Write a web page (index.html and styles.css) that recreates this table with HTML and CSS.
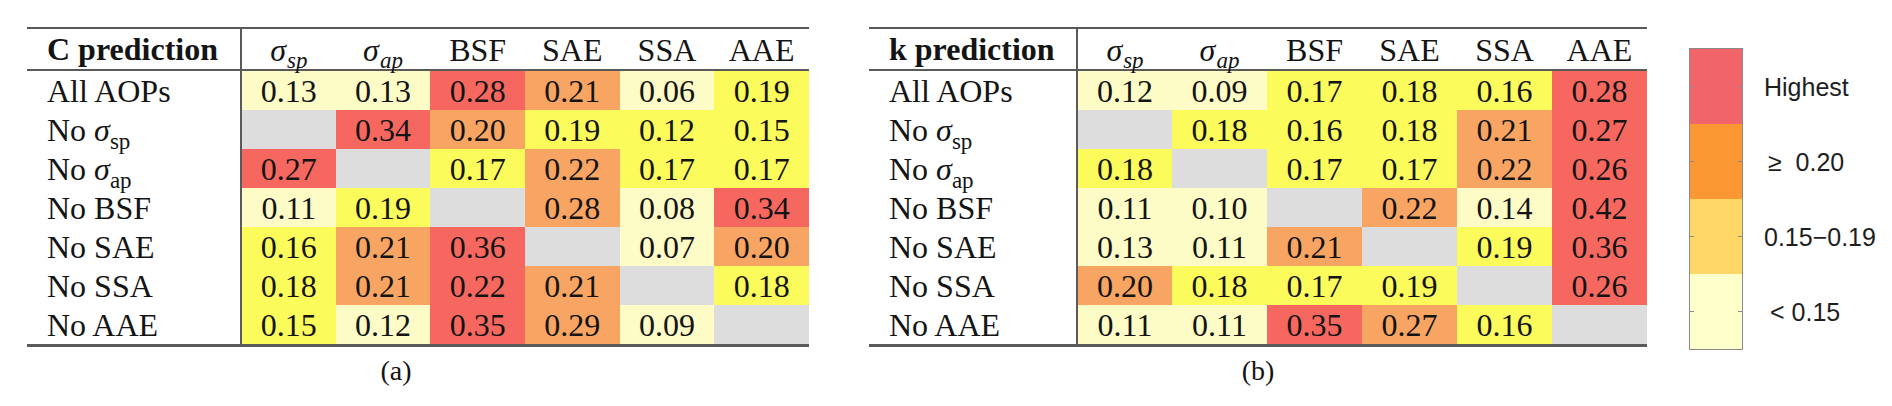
FILE: index.html
```html
<!DOCTYPE html>
<html>
<head>
<meta charset="utf-8">
<link rel="stylesheet" href="styles.css">
</head>
<body>
<div class="page">
  <div class="panel panel-a">
    <table class="tbl">
      <colgroup><col class="lab-a"><col class="c"><col class="c"><col class="c"><col class="c"><col class="c"><col class="c"></colgroup>
      <thead>
        <tr><th class="lab">C prediction</th><th><i>σ<sub>sp</sub></i></th><th><i>σ<sub>ap</sub></i></th><th>BSF</th><th>SAE</th><th>SSA</th><th>AAE</th></tr>
      </thead>
      <tbody>
        <tr><td class="lab">All AOPs</td><td class="p">0.13</td><td class="p">0.13</td><td class="r">0.28</td><td class="o">0.21</td><td class="p">0.06</td><td class="y">0.19</td></tr>
        <tr><td class="lab">No <i>σ</i><sub>sp</sub></td><td class="g"></td><td class="r">0.34</td><td class="o">0.20</td><td class="y">0.19</td><td class="y">0.12</td><td class="y">0.15</td></tr>
        <tr><td class="lab">No <i>σ</i><sub>ap</sub></td><td class="r">0.27</td><td class="g"></td><td class="y">0.17</td><td class="o">0.22</td><td class="y">0.17</td><td class="y">0.17</td></tr>
        <tr><td class="lab">No BSF</td><td class="p">0.11</td><td class="y">0.19</td><td class="g"></td><td class="o">0.28</td><td class="p">0.08</td><td class="r">0.34</td></tr>
        <tr><td class="lab">No SAE</td><td class="y">0.16</td><td class="o">0.21</td><td class="r">0.36</td><td class="g"></td><td class="p">0.07</td><td class="o">0.20</td></tr>
        <tr><td class="lab">No SSA</td><td class="y">0.18</td><td class="o">0.21</td><td class="r">0.22</td><td class="o">0.21</td><td class="g"></td><td class="y">0.18</td></tr>
        <tr><td class="lab">No AAE</td><td class="y">0.15</td><td class="p">0.12</td><td class="r">0.35</td><td class="o">0.29</td><td class="p">0.09</td><td class="g"></td></tr>
      </tbody>
    </table>
    <div class="caption caption-a">(a)</div>
  </div>

  <div class="panel panel-b">
    <table class="tbl">
      <colgroup><col class="lab-b"><col class="c"><col class="c"><col class="c"><col class="c"><col class="c"><col class="c"></colgroup>
      <thead>
        <tr><th class="lab">k prediction</th><th><i>σ<sub>sp</sub></i></th><th><i>σ<sub>ap</sub></i></th><th>BSF</th><th>SAE</th><th>SSA</th><th>AAE</th></tr>
      </thead>
      <tbody>
        <tr><td class="lab">All AOPs</td><td class="p">0.12</td><td class="p">0.09</td><td class="y">0.17</td><td class="y">0.18</td><td class="y">0.16</td><td class="r">0.28</td></tr>
        <tr><td class="lab">No <i>σ</i><sub>sp</sub></td><td class="g"></td><td class="y">0.18</td><td class="y">0.16</td><td class="y">0.18</td><td class="o">0.21</td><td class="r">0.27</td></tr>
        <tr><td class="lab">No <i>σ</i><sub>ap</sub></td><td class="y">0.18</td><td class="g"></td><td class="y">0.17</td><td class="y">0.17</td><td class="o">0.22</td><td class="r">0.26</td></tr>
        <tr><td class="lab">No BSF</td><td class="p">0.11</td><td class="p">0.10</td><td class="g"></td><td class="o">0.22</td><td class="p">0.14</td><td class="r">0.42</td></tr>
        <tr><td class="lab">No SAE</td><td class="p">0.13</td><td class="p">0.11</td><td class="o">0.21</td><td class="g"></td><td class="y">0.19</td><td class="r">0.36</td></tr>
        <tr><td class="lab">No SSA</td><td class="o">0.20</td><td class="y">0.18</td><td class="y">0.17</td><td class="y">0.19</td><td class="g"></td><td class="r">0.26</td></tr>
        <tr><td class="lab">No AAE</td><td class="p">0.11</td><td class="p">0.11</td><td class="r">0.35</td><td class="o">0.27</td><td class="y">0.16</td><td class="g"></td></tr>
      </tbody>
    </table>
    <div class="caption">(b)</div>
  </div>

  <div class="legend">
    <div class="bar">
      <div class="seg seg-r"></div>
      <div class="seg seg-o"></div>
      <div class="seg seg-y"></div>
      <div class="seg seg-p"></div>
    </div>
    <div class="labels">
      <div class="lbl">Highest</div>
      <div class="lbl lbl-ge">≥&nbsp; 0.20</div>
      <div class="lbl">0.15−0.19</div>
      <div class="lbl lbl-lt">&lt; 0.15</div>
    </div>
  </div>
</div>
</body>
</html>
```

FILE: styles.css
```css
html, body {
  margin: 0;
  padding: 0;
  background: #ffffff;
}

.page {
  display: flex;
  align-items: flex-start;
  padding: 27px 0 0 27px;
  width: 1892px;
  height: 406px;
  box-sizing: border-box;
  font-family: "Liberation Serif", "Times New Roman", serif;
  color: #141414;
}

.panel {
  display: flex;
  flex-direction: column;
}

.panel-a {
  width: 782px;
}

.panel-b {
  width: 778px;
  margin-left: 60px;
}

.tbl {
  border-collapse: collapse;
  table-layout: fixed;
  width: 100%;
  font-size: 32px;
}

.lab-a { width: 214px; }
.lab-b { width: 208px; }

.tbl thead tr {
  border-top: 2px solid #5a5a5a;
  border-bottom: 2px solid #5a5a5a;
}

.tbl tbody tr:last-child {
  border-bottom: 3px solid #5a5a5a;
}

.tbl th,
.tbl td {
  padding: 0;
  text-align: center;
  line-height: 1;
  white-space: nowrap;
}

.tbl th {
  height: 38px;
  font-weight: normal;
  padding-top: 2px;
}

.tbl td {
  height: 39px;
}

.tbl .lab {
  text-align: left;
  padding-left: 20px;
  border-right: 2px solid #5a5a5a;
}

.tbl th.lab {
  font-weight: bold;
  padding-top: 0;
}

.tbl th sub {
  font-size: 23px;
  vertical-align: -7px;
  line-height: 0;
  margin-left: 1px;
}

.tbl td sub {
  font-size: 23px;
  vertical-align: -8px;
  line-height: 0;
}

.tbl td.p { background: #fdfbc6; }
.tbl td.y { background: #fbfb5b; }
.tbl td.o { background: #f8a462; }
.tbl td.r { background: #f6685f; }
.tbl td.g { background: #dddddd; }

.caption {
  text-align: center;
  font-size: 28px;
  margin-top: 8px;
  line-height: 32px;
}

.caption-a {
  padding-right: 44px;
}

.legend {
  display: flex;
  margin-left: 42px;
  margin-top: 21px;
  font-family: "Liberation Sans", Arial, sans-serif;
  color: #1e1e1e;
}

.bar {
  display: flex;
  flex-direction: column;
  width: 54px;
  border: 1px solid #8a8a8a;
  box-sizing: border-box;
}

.seg {
  height: 75px;
  position: relative;
}

.seg::before,
.seg::after {
  content: "";
  position: absolute;
  top: 37px;
  width: 4px;
  height: 1px;
  background: #8a8a8a;
}

.seg::before { left: 0; }
.seg::after { right: 0; }

.seg-r { background: #f0646a; }
.seg-o { background: #fb9834; }
.seg-y { background: #fed766; }
.seg-p { background: #ffffcc; }

.labels {
  display: flex;
  flex-direction: column;
  margin-left: 21px;
}

.lbl {
  height: 75px;
  display: flex;
  align-items: center;
  font-size: 25px;
  padding-left: 0;
  padding-top: 4px;
  box-sizing: border-box;
}

.lbl-ge {
  padding-left: 4px;
}

.lbl-lt {
  padding-left: 6px;
}
```
